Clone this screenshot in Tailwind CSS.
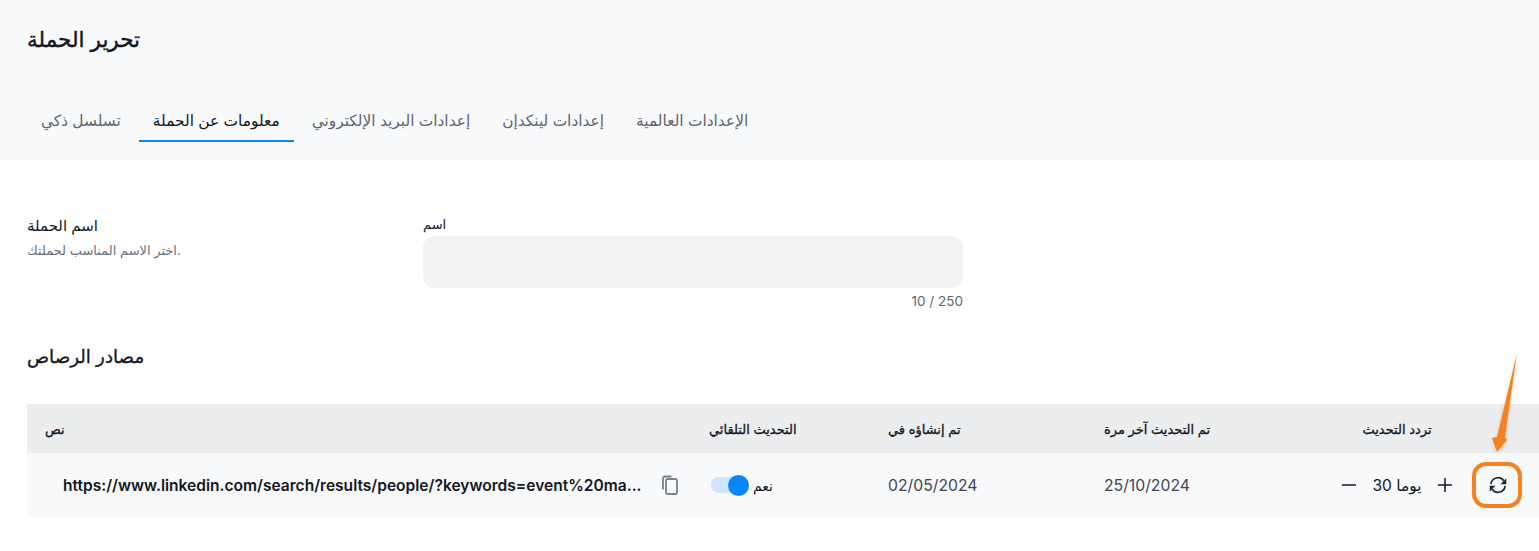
<!DOCTYPE html>
<html lang="ar">
<head>
  <meta charset="UTF-8" />
  <meta name="viewport" content="width=device-width, initial-scale=1.0">
  <title>تحرير الحملة</title>
  <script src="https://cdn.jsdelivr.net/npm/@tailwindcss/browser@4"></script>
</head>
<body class="relative h-[551px] overflow-hidden bg-white font-['Inter','DejaVu_Sans',sans-serif] text-[#14171f]">
  <!-- Header + tabs -->
  <header class="h-[160px] bg-[#f8f9fb] px-[27px] pt-[24px]">
    <h1 class="text-[21.500px] leading-[30px] [-webkit-text-stroke:0.4px]">تحرير الحملة</h1>
    <nav class="mt-[40px] flex gap-1 text-[15.400px] text-[#5e6470]">
      <a class="px-[14px] h-[48px] leading-[54px]">تسلسل ذكي</a>
      <a class="px-[14px] h-[48px] leading-[54px] text-[#14171f] border-b-2 border-[#0a84f0]">معلومات عن الحملة</a>
      <a class="px-[14px] h-[48px] leading-[54px]">إعدادات البريد الإلكتروني</a>
      <a class="px-[14px] h-[48px] leading-[54px]">إعدادات لينكدإن</a>
      <a class="px-[14px] h-[48px] leading-[54px]">الإعدادات العالمية</a>
    </nav>
  </header>

  <!-- Campaign name -->
  <section class="flex px-[27px] pt-[56px]">
    <div class="w-[396px]">
      <h2 class="text-[15px] leading-[20px]">اسم الحملة</h2>
      <p class="mt-[5px] text-[13px] leading-[18px] text-[#6b7280]">اختر الاسم المناسب لحملتك.</p>
    </div>
    <div class="w-[540px]">
      <label class="block text-[13px] leading-[16px]">اسم</label>
      <div class="mt-[4px] h-[52px] rounded-xl bg-[#f2f3f5]"></div>
      <p class="mt-[5px] text-right text-[13.500px] leading-[16px] text-[#5e6470]">10 / 250</p>
    </div>
  </section>

  <h2 class="mt-[35px] px-[27px] text-[18.300px] leading-[24px] [-webkit-text-stroke:0.3px]">مصادر الرصاص</h2>

  <!-- Sources table -->
  <div class="mt-[36px] ml-[27px]">
    <div class="grid h-[49px] grid-cols-[682px_179px_216px_238px_197px] items-center bg-[#ecedef] pt-[2px] text-[13px] [-webkit-text-stroke:0.3px]">
      <div class="pl-[18px]">نص</div>
      <div>التحديث التلقائي</div>
      <div>تم إنشاؤه في</div>
      <div>تم التحديث آخر مرة</div>
      <div class="w-[110px] text-center">تردد التحديث</div>
    </div>
    <div class="grid h-[64px] grid-cols-[682px_179px_216px_238px_197px] items-center bg-[#f8f9fb] text-[15.750px] text-[#3f4654]">
      <div class="flex items-center pl-[36px]">
        <span class="w-[581px] whitespace-nowrap pt-[1px] text-[15.560px] font-semibold text-[#14171f]">https://www.linkedin.com/search/results/people/?keywords=event%20ma...</span>
        <svg class="ml-[15px] size-[22px] text-[#7b808a]" viewBox="0 0 22 22" fill="none" stroke="currentColor" stroke-width="1.8" stroke-linejoin="round"><path d="M4 15.500V4.500a2 2 0 0 1 2-2h6.500"/><rect x="7" y="5" width="11" height="15" rx="1.800"/></svg>
      </div>
      <div class="flex items-center gap-[4px]">
        <div class="relative ml-[2px] h-[16px] w-[38px] rounded-full bg-[#cfe5fb]">
          <span class="absolute right-0 top-[-2.500px] size-[21px] rounded-full bg-[#0a84ff]"></span>
        </div>
        <span class="pt-[1px] text-[14px] text-[#14171f]">نعم</span>
      </div>
      <div class="pt-[1px]">02/05/2024</div>
      <div class="pt-[1px]">25/10/2024</div>
      <div class="flex items-center">
        <div class="flex w-[110px] items-center justify-between text-[#14171f]">
          <svg class="size-[14px]" viewBox="0 0 14 14" stroke="currentColor" stroke-width="1.500"><path d="M0 7h14"/></svg>
          <span class="pt-[1px] text-[15.500px]">30 يوما</span>
          <svg class="size-[14px]" viewBox="0 0 14 14" stroke="currentColor" stroke-width="1.500"><path d="M0 7h14M7 0v14"/></svg>
        </div>
        <button class="ml-[20px] flex h-[46px] w-[50px] items-center justify-center rounded-[14px] border-4 border-[#f5811f]">
          <svg class="size-[20px] translate-x-[1px] text-[#23262d]" viewBox="0 0 24 24" fill="none" stroke="currentColor" stroke-width="2"><path d="M3.500 11a8.500 8.500 0 0 1 15.500-4"/><path d="M20.500 13a8.500 8.500 0 0 1-15.500 4"/><path d="M22 4v7h-7z" fill="currentColor" stroke="none"/><path d="M2 20v-7h7z" fill="currentColor" stroke="none"/></svg>
        </button>
      </div>
    </div>
  </div>

  <!-- Annotation arrow over the table -->
  <svg class="absolute left-[1480px] top-[345px] drop-shadow-sm" width="50" height="115" viewBox="0 0 50 115"><path d="M37 8 L25 92 L27 95 L17 107 L12 93 L17 92 Z" fill="#f5811f"/></svg>
</body>
</html>
